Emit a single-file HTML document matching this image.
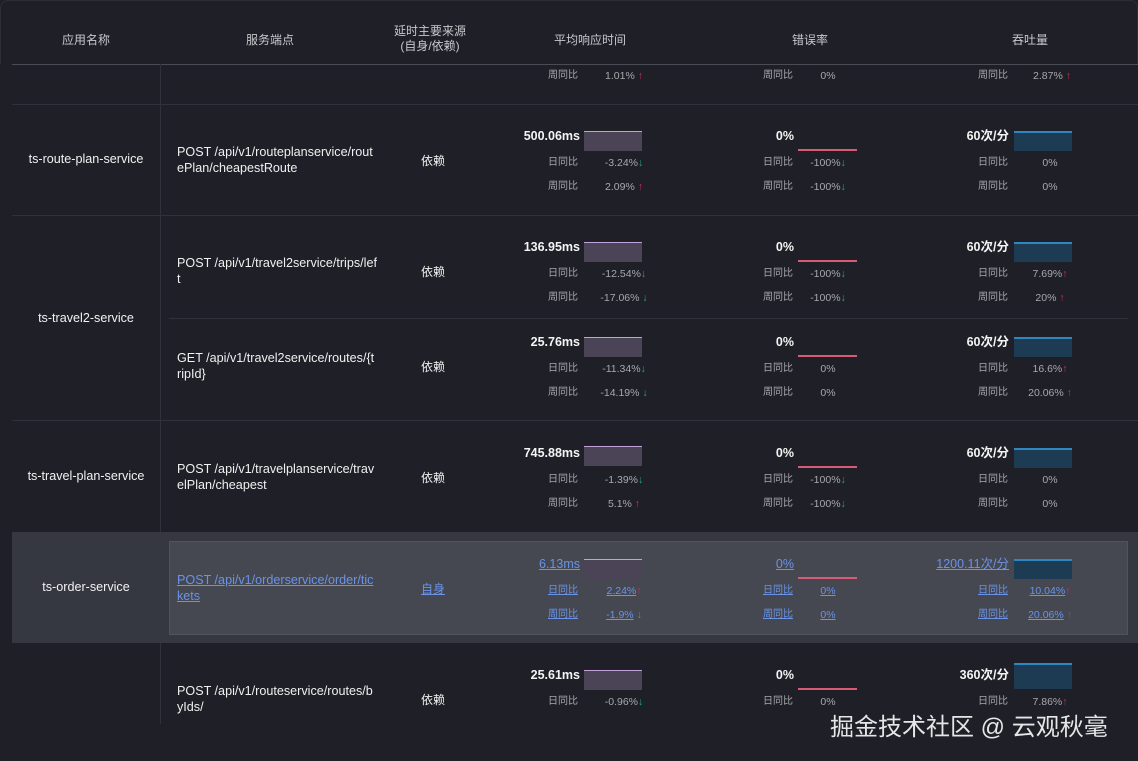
<!DOCTYPE html>
<html><head><meta charset="utf-8"><style>
*{margin:0;padding:0;box-sizing:border-box}
body{width:1138px;height:761px;background:#1e1f27;font-family:"Liberation Sans","Noto Sans CJK SC",sans-serif;color:#e8e8ea;position:relative;overflow:hidden}
.a{position:absolute;white-space:nowrap}
.h{font-size:12px;color:#c8c8cc;text-align:center}
.hl{position:absolute;background:#30323b;height:1px}
.n{font-size:12.6px;color:#f2f2f2;text-align:center;width:148px;left:12px}
.ep{font-size:12.6px;color:#f0f0f0;left:177px;width:200px;white-space:normal;line-height:16px;word-break:break-all}
.src{font-size:12px;color:#f0f0f0;left:400px;width:66px;text-align:center}
.v{font-size:12.5px;font-weight:bold;color:#f4f4f4;text-align:right;width:100px;line-height:16px}
.l{font-size:10px;color:#a8a8ae;line-height:14px}
.p{font-size:10.5px;color:#a8a8ae;text-align:center;width:64px;line-height:14px}
.up{color:#d0305a}.dn{color:#1fb07a}
.cr{position:absolute;width:58px;height:20px;background:#4a4456;border-top:1px solid #c3a2dc}
.ce{position:absolute;width:59px;height:2px;background:#d85a74}
.ct{position:absolute;width:58px;height:20px;background:#1d3b52;border-top:2px solid #2f86c0}
.lk{color:#6a93e8;text-decoration:underline}
</style></head><body>
<div class="a" style="left:0;top:0;width:1138px;height:64px;border:1px solid #2c2e36;border-bottom:none;border-radius:8px 8px 0 0"></div>
<div class="a h" style="left:12px;width:148px;top:31px">应用名称</div>
<div class="a h" style="left:170px;width:200px;top:31px">服务端点</div>
<div class="a h" style="left:380px;width:100px;top:24px;line-height:15px">延时主要来源<br>(自身/依赖)</div>
<div class="a h" style="left:540px;width:100px;top:31px">平均响应时间</div>
<div class="a h" style="left:760px;width:100px;top:31px">错误率</div>
<div class="a h" style="left:980px;width:100px;top:31px">吞吐量</div>
<div class="hl" style="left:12px;width:1126px;top:64px;background:#4a4c55"></div>
<div class="a" style="left:160px;top:64px;width:1px;height:697px;background:#30323b"></div>
<div class="hl" style="left:12px;width:1126px;top:104px"></div>
<div class="hl" style="left:12px;width:1126px;top:215px"></div>
<div class="hl" style="left:169px;width:959px;top:318px"></div>
<div class="hl" style="left:12px;width:1126px;top:420px"></div>
<div class="a" style="left:12px;top:532px;width:1126px;height:111px;background:#353741"></div>
<div class="a" style="left:169px;top:541px;width:959px;height:94px;background:#454851;border:1px solid #50535c"></div>

<div class="a l" style="left:548px;top:69px">周同比</div><div class="a p" style="left:592px;top:69px">1.01% <span class="up">↑</span></div>
<div class="a l" style="left:763px;top:69px">周同比</div><div class="a p" style="left:796px;top:69px">0%</div>
<div class="a l" style="left:978px;top:69px">周同比</div><div class="a p" style="left:1020px;top:69px">2.87% <span class="up">↑</span></div>

<div class="a n" style="top:152px">ts-route-plan-service</div>
<div class="a ep" style="top:144px">POST /api/v1/routeplanservice/routePlan/cheapestRoute</div>
<div class="a src" style="top:152px">依赖</div>

<div class="a n" style="top:311px">ts-travel2-service</div>
<div class="a ep" style="top:255px">POST /api/v1/travel2service/trips/left</div>
<div class="a src" style="top:263px">依赖</div>
<div class="a ep" style="top:350px">GET /api/v1/travel2service/routes/{tripId}</div>
<div class="a src" style="top:358px">依赖</div>

<div class="a n" style="top:469px">ts-travel-plan-service</div>
<div class="a ep" style="top:461px">POST /api/v1/travelplanservice/travelPlan/cheapest</div>
<div class="a src" style="top:469px">依赖</div>

<div class="a n" style="top:580px">ts-order-service</div>
<div class="a ep lk" style="top:572px">POST /api/v1/orderservice/order/tickets</div>
<div class="a src lk" style="top:580px">自身</div>

<div class="a ep" style="top:683px">POST /api/v1/routeservice/routes/byIds/</div>
<div class="a src" style="top:691px">依赖</div>

<div class="a v" style="left:480px;top:128px">500.06ms</div><div class="cr" style="left:584px;top:131px"></div>
<div class="a l" style="left:548px;top:156px">日同比</div><div class="a p" style="left:592px;top:156px">-3.24%<span class="dn">↓</span></div>
<div class="a l" style="left:548px;top:180px">周同比</div><div class="a p" style="left:592px;top:180px">2.09% <span class="up">↑</span></div>
<div class="a v" style="left:694px;top:128px">0%</div><div class="ce" style="left:798px;top:149px"></div>
<div class="a l" style="left:763px;top:156px">日同比</div><div class="a p" style="left:796px;top:156px">-100%<span class="dn">↓</span></div>
<div class="a l" style="left:763px;top:180px">周同比</div><div class="a p" style="left:796px;top:180px">-100%<span class="dn">↓</span></div>
<div class="a v" style="left:909px;top:128px">60次/分</div><div class="ct" style="left:1014px;top:131px"></div>
<div class="a l" style="left:978px;top:156px">日同比</div><div class="a p" style="left:1018px;top:156px">0%</div>
<div class="a l" style="left:978px;top:180px">周同比</div><div class="a p" style="left:1018px;top:180px">0%</div>

<div class="a v" style="left:480px;top:239px">136.95ms</div><div class="cr" style="left:584px;top:242px"></div>
<div class="a l" style="left:548px;top:267px">日同比</div><div class="a p" style="left:592px;top:267px">-12.54%<span class="dn">↓</span></div>
<div class="a l" style="left:548px;top:291px">周同比</div><div class="a p" style="left:592px;top:291px">-17.06% <span class="dn">↓</span></div>
<div class="a v" style="left:694px;top:239px">0%</div><div class="ce" style="left:798px;top:260px"></div>
<div class="a l" style="left:763px;top:267px">日同比</div><div class="a p" style="left:796px;top:267px">-100%<span class="dn">↓</span></div>
<div class="a l" style="left:763px;top:291px">周同比</div><div class="a p" style="left:796px;top:291px">-100%<span class="dn">↓</span></div>
<div class="a v" style="left:909px;top:239px">60次/分</div><div class="ct" style="left:1014px;top:242px"></div>
<div class="a l" style="left:978px;top:267px">日同比</div><div class="a p" style="left:1018px;top:267px">7.69%<span class="up">↑</span></div>
<div class="a l" style="left:978px;top:291px">周同比</div><div class="a p" style="left:1018px;top:291px">20% <span class="up">↑</span></div>

<div class="a v" style="left:480px;top:334px">25.76ms</div><div class="cr" style="left:584px;top:337px"></div>
<div class="a l" style="left:548px;top:362px">日同比</div><div class="a p" style="left:592px;top:362px">-11.34%<span class="dn">↓</span></div>
<div class="a l" style="left:548px;top:386px">周同比</div><div class="a p" style="left:592px;top:386px">-14.19% <span class="dn">↓</span></div>
<div class="a v" style="left:694px;top:334px">0%</div><div class="ce" style="left:798px;top:355px"></div>
<div class="a l" style="left:763px;top:362px">日同比</div><div class="a p" style="left:796px;top:362px">0%</div>
<div class="a l" style="left:763px;top:386px">周同比</div><div class="a p" style="left:796px;top:386px">0%</div>
<div class="a v" style="left:909px;top:334px">60次/分</div><div class="ct" style="left:1014px;top:337px"></div>
<div class="a l" style="left:978px;top:362px">日同比</div><div class="a p" style="left:1018px;top:362px">16.6%<span class="up">↑</span></div>
<div class="a l" style="left:978px;top:386px">周同比</div><div class="a p" style="left:1018px;top:386px">20.06% <span class="up">↑</span></div>

<div class="a v" style="left:480px;top:445px">745.88ms</div><div class="cr" style="left:584px;top:446px"></div>
<div class="a l" style="left:548px;top:473px">日同比</div><div class="a p" style="left:592px;top:473px">-1.39%<span class="dn">↓</span></div>
<div class="a l" style="left:548px;top:497px">周同比</div><div class="a p" style="left:592px;top:497px">5.1% <span class="up">↑</span></div>
<div class="a v" style="left:694px;top:445px">0%</div><div class="ce" style="left:798px;top:466px"></div>
<div class="a l" style="left:763px;top:473px">日同比</div><div class="a p" style="left:796px;top:473px">-100%<span class="dn">↓</span></div>
<div class="a l" style="left:763px;top:497px">周同比</div><div class="a p" style="left:796px;top:497px">-100%<span class="dn">↓</span></div>
<div class="a v" style="left:909px;top:445px">60次/分</div><div class="ct" style="left:1014px;top:448px"></div>
<div class="a l" style="left:978px;top:473px">日同比</div><div class="a p" style="left:1018px;top:473px">0%</div>
<div class="a l" style="left:978px;top:497px">周同比</div><div class="a p" style="left:1018px;top:497px">0%</div>

<div class="a v lk" style="left:480px;top:556px;font-weight:normal">6.13ms</div><div class="cr" style="left:584px;top:559px"></div>
<div class="a l lk" style="left:548px;top:584px">日同比</div><div class="a p" style="left:592px;top:584px"><span class="lk">2.24%</span><span class="up">↑</span></div>
<div class="a l lk" style="left:548px;top:608px">周同比</div><div class="a p" style="left:592px;top:608px"><span class="lk">-1.9%</span> <span class="dn">↓</span></div>
<div class="a v lk" style="left:694px;top:556px;font-weight:normal">0%</div><div class="ce" style="left:798px;top:577px"></div>
<div class="a l lk" style="left:763px;top:584px">日同比</div><div class="a p lk" style="left:796px;top:584px">0%</div>
<div class="a l lk" style="left:763px;top:608px">周同比</div><div class="a p lk" style="left:796px;top:608px">0%</div>
<div class="a v lk" style="left:909px;top:556px;font-weight:normal">1200.11次/分</div><div class="ct" style="left:1014px;top:559px"></div>
<div class="a l lk" style="left:978px;top:584px">日同比</div><div class="a p" style="left:1018px;top:584px"><span class="lk">10.04%</span><span class="up">↑</span></div>
<div class="a l lk" style="left:978px;top:608px">周同比</div><div class="a p" style="left:1018px;top:608px"><span class="lk">20.06%</span> <span class="up">↑</span></div>

<div class="a v" style="left:480px;top:667px">25.61ms</div><div class="cr" style="left:584px;top:670px"></div>
<div class="a l" style="left:548px;top:695px">日同比</div><div class="a p" style="left:592px;top:695px">-0.96%<span class="dn">↓</span></div>
<div class="a v" style="left:694px;top:667px">0%</div><div class="ce" style="left:798px;top:688px"></div>
<div class="a l" style="left:763px;top:695px">日同比</div><div class="a p" style="left:796px;top:695px">0%</div>
<div class="a v" style="left:909px;top:667px">360次/分</div><div class="ct" style="left:1014px;top:663px;height:26px"></div>
<div class="a l" style="left:978px;top:695px">日同比</div><div class="a p" style="left:1018px;top:695px">7.86%<span class="up">↑</span></div>
<div class="a" style="left:0;top:724px;width:1138px;height:37px;background:#1e1f27"></div>
<div class="a" style="left:830px;top:707px;font-size:24px;color:#e6e6e6">掘金技术社区 @ 云观秋毫</div>
</body></html>
